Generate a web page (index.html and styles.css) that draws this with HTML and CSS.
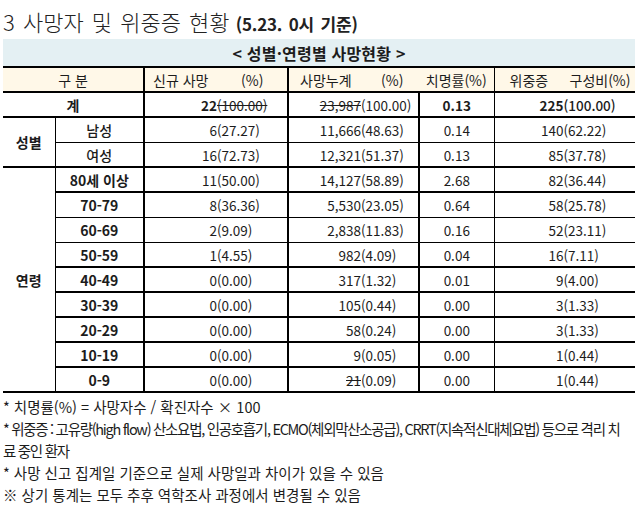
FILE: index.html
```html
<!DOCTYPE html>
<html lang="ko">
<head>
<meta charset="utf-8">
<title>사망자 및 위중증 현황</title>
<link rel="stylesheet" href="styles.css">
</head>
<body>
<div class="page">
  <h1 class="heading"><span class="heading-main">3 사망자 및 위중증 현황</span> <span class="heading-date">(5.23. 0시 기준)</span></h1>
  <table class="stats">
    <colgroup>
      <col class="c1"><col class="c2"><col class="c3"><col class="c4"><col class="c5"><col class="c6">
    </colgroup>
    <tr class="title-row"><td colspan="6">&lt; 성별·연령별 사망현황 &gt;</td></tr>
    <tr class="head-row">
      <th colspan="2" class="h-label">구 분</th>
      <th class="h-pair h-new"><span>신규 사망</span><span>(%)</span></th>
      <th class="h-pair h-cum"><span>사망누계</span><span>(%)</span></th>
      <th class="h-rate">치명률(%)</th>
      <th class="h-pair h-sev"><span>위중증</span><span>구성비(%)</span></th>
    </tr>
    <tr class="row total thick">
      <td colspan="2" class="lbl total-lbl">계</td>
      <td class="num vl2"><span class="n b">22</span><s class="p">(100.00)</s></td>
      <td class="num vl2"><s class="n">23,987</s><span class="p">(100.00)</span></td>
      <td class="rate b">0.13</td>
      <td class="num vl1"><span class="n b">225</span><span class="p sb">(100.00)</span></td>
    </tr>
    <tr class="row thin">
      <td rowspan="2" class="grp">성별</td>
      <td class="lbl sex">남성</td>
      <td class="num vl2"><span class="n">6</span><span class="p">(27.27)</span></td>
      <td class="num vl2"><span class="n">11,666</span><span class="p">(48.63)</span></td>
      <td class="rate">0.14</td>
      <td class="num vl1"><span class="n">140</span><span class="p">(62.22)</span></td>
    </tr>
    <tr class="row thick">
      <td class="lbl sex">여성</td>
      <td class="num vl2"><span class="n">16</span><span class="p">(72.73)</span></td>
      <td class="num vl2"><span class="n">12,321</span><span class="p">(51.37)</span></td>
      <td class="rate">0.13</td>
      <td class="num vl1"><span class="n">85</span><span class="p">(37.78)</span></td>
    </tr>
    <tr class="row thick">
      <td rowspan="9" class="grp">연령</td>
      <td class="lbl age">80세 이상</td>
      <td class="num vl2"><span class="n">11</span><span class="p">(50.00)</span></td>
      <td class="num vl2"><span class="n">14,127</span><span class="p">(58.89)</span></td>
      <td class="rate">2.68</td>
      <td class="num vl1"><span class="n">82</span><span class="p">(36.44)</span></td>
    </tr>
    <tr class="row thin">
      <td class="lbl age">70-79</td>
      <td class="num vl2"><span class="n">8</span><span class="p">(36.36)</span></td>
      <td class="num vl2"><span class="n">5,530</span><span class="p">(23.05)</span></td>
      <td class="rate">0.64</td>
      <td class="num vl1"><span class="n">58</span><span class="p">(25.78)</span></td>
    </tr>
    <tr class="row thin">
      <td class="lbl age">60-69</td>
      <td class="num vl2"><span class="n">2</span><span class="p">(9.09)</span></td>
      <td class="num vl2"><span class="n">2,838</span><span class="p">(11.83)</span></td>
      <td class="rate">0.16</td>
      <td class="num vl1"><span class="n">52</span><span class="p">(23.11)</span></td>
    </tr>
    <tr class="row thick">
      <td class="lbl age">50-59</td>
      <td class="num vl2"><span class="n">1</span><span class="p">(4.55)</span></td>
      <td class="num vl2"><span class="n">982</span><span class="p">(4.09)</span></td>
      <td class="rate">0.04</td>
      <td class="num vl1"><span class="n">16</span><span class="p">(7.11)</span></td>
    </tr>
    <tr class="row thick">
      <td class="lbl age">40-49</td>
      <td class="num vl2"><span class="n">0</span><span class="p">(0.00)</span></td>
      <td class="num vl2"><span class="n">317</span><span class="p">(1.32)</span></td>
      <td class="rate">0.01</td>
      <td class="num vl1"><span class="n">9</span><span class="p">(4.00)</span></td>
    </tr>
    <tr class="row thick">
      <td class="lbl age">30-39</td>
      <td class="num vl2"><span class="n">0</span><span class="p">(0.00)</span></td>
      <td class="num vl2"><span class="n">105</span><span class="p">(0.44)</span></td>
      <td class="rate">0.00</td>
      <td class="num vl1"><span class="n">3</span><span class="p">(1.33)</span></td>
    </tr>
    <tr class="row thick">
      <td class="lbl age">20-29</td>
      <td class="num vl2"><span class="n">0</span><span class="p">(0.00)</span></td>
      <td class="num vl2"><span class="n">58</span><span class="p">(0.24)</span></td>
      <td class="rate">0.00</td>
      <td class="num vl1"><span class="n">3</span><span class="p">(1.33)</span></td>
    </tr>
    <tr class="row thick">
      <td class="lbl age">10-19</td>
      <td class="num vl2"><span class="n">0</span><span class="p">(0.00)</span></td>
      <td class="num vl2"><span class="n">9</span><span class="p">(0.05)</span></td>
      <td class="rate">0.00</td>
      <td class="num vl1"><span class="n">1</span><span class="p">(0.44)</span></td>
    </tr>
    <tr class="row thick">
      <td class="lbl age">0-9</td>
      <td class="num vl2"><span class="n">0</span><span class="p">(0.00)</span></td>
      <td class="num vl2"><s class="n">21</s><span class="p">(0.09)</span></td>
      <td class="rate">0.00</td>
      <td class="num vl1"><span class="n">1</span><span class="p">(0.44)</span></td>
    </tr>
  </table>
  <div class="notes">
    <p class="note">* 치명률(%) = 사망자수 / 확진자수 × 100</p>
    <p class="note note-tight">* 위중증 : 고유량(high flow) 산소요법, 인공호흡기, ECMO(체외막산소공급), CRRT(지속적신대체요법) 등으로 격리 치<br>료 중인 환자</p>
    <p class="note">* 사망 신고 집계일 기준으로 실제 사망일과 차이가 있을 수 있음</p>
    <p class="note">※ 상기 통계는 모두 추후 역학조사 과정에서 변경될 수 있음</p>
  </div>
</div>
</body>
</html>
```
FILE: styles.css
```css
html, body {
  margin: 0;
  padding: 0;
  background: #ffffff;
}

body {
  font-family: "Noto Sans CJK KR", "Noto Sans", sans-serif;
  color: #1c1c1c;
}

.page {
  padding: 0 8px 0 3px;
}

.heading {
  margin: 0;
  padding-top: 3px;
  height: 36px;
  line-height: 36px;
  font-weight: 300;
  font-size: 22px;
  white-space: nowrap;
  color: #222;
}

.heading-main {
  word-spacing: 2px;
}

.heading-date {
  font-weight: 700;
  font-size: 17px;
  letter-spacing: -0.2px;
  word-spacing: 2px;
  color: #222;
}

.stats {
  width: 632px;
  table-layout: fixed;
  border-collapse: collapse;
  font-size: 13.5px;
}

.c1 { width: 52px; }
.c2 { width: 89px; }
.c3 { width: 144px; }
.c4 { width: 131px; }
.c5 { width: 75px; }
.c6 { width: 141px; }

.stats td,
.stats th {
  padding: 0;
  white-space: nowrap;
  vertical-align: middle;
}

.title-row td {
  height: 27px;
  background: #e4f0f3;
  text-align: center;
  font-weight: 700;
  font-size: 16px;
  border-bottom: 2px solid #000;
  letter-spacing: 0.2px;
}

.head-row th {
  height: 23px;
  background: #fff8e8;
  font-weight: 400;
  font-size: 14px;
  border-bottom: 2px solid #000;
}

.h-label {
  text-align: center;
  border-right: 2px solid #000;
}

.h-pair span {
  display: inline-block;
}

.h-new {
  text-align: left;
  border-right: 2px solid #000;
}

.h-new span:first-child { margin-left: 8px; width: 88px; }

.h-cum {
  text-align: left;
}

.h-cum span:first-child { margin-left: 11px; width: 81px; }

.h-rate {
  text-align: center;
  border-right: 1px solid #000;
}

.h-sev {
  text-align: left;
}

.h-sev span:first-child { margin-left: 15px; width: 60px; }

.row.thick td { height: 23px; border-bottom: 2px solid #000; }
.row.thin td { height: 24px; border-bottom: 1px solid #000; }
.row td.grp { border-bottom: 2px solid #000; }

.vl2 { border-right: 2px solid #000; }
.rate { border-right: 1px solid #000; text-align: center; }

.lbl {
  text-align: center;
}

.total-lbl {
  font-weight: 700;
  font-size: 14px;
  border-right: 2px solid #000;
}

.grp {
  text-align: center;
  font-weight: 700;
  font-size: 14px;
  border-right: 1px solid #000;
}

.sex {
  font-weight: 500;
  font-size: 14px;
  border-right: 2px solid #000;
}

.age {
  font-weight: 700;
  font-size: 14px;
  border-right: 2px solid #000;
}

.num .n {
  display: inline-block;
  width: 72px;
  text-align: right;
  text-decoration-thickness: 1px;
}

.num .p {
  text-decoration-thickness: 1px;
}

.vl1.num .n { width: 69px; }

.b { font-weight: 700; }
.sb { font-weight: 500; }

.notes {
  margin-top: 3px;
}

.note {
  margin: 0;
  font-size: 14.5px;
  line-height: 22px;
  white-space: nowrap;
  color: #1c1c1c;
}

.note-tight {
  letter-spacing: -1.3px;
  word-spacing: 0;
}
```
